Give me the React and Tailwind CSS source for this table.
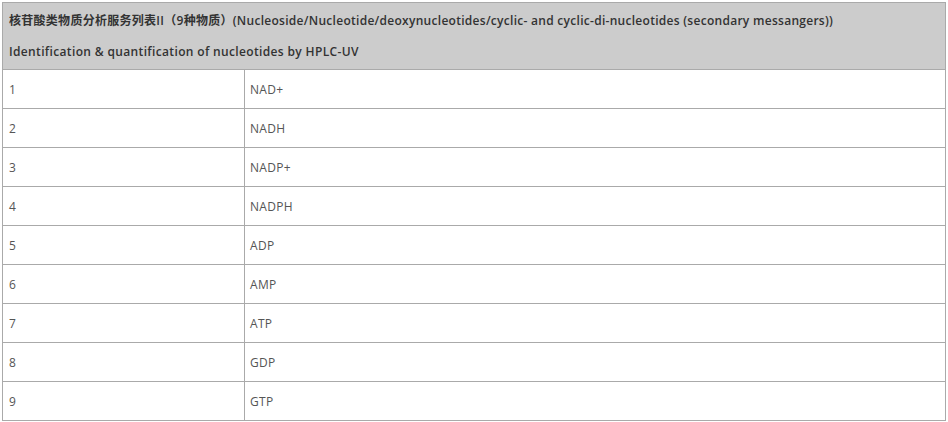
import React from 'react';

const rows = ['NAD+', 'NADH', 'NADP+', 'NADPH', 'ADP', 'AMP', 'ATP', 'GDP', 'GTP'];

const App = () => {
    return (
        <div className="w-[948px] h-[422px] bg-white p-[2px]" style={{ fontFamily: '"Open Sans", "Noto Sans CJK SC", sans-serif' }}>
            <table className="w-[944px] border-collapse text-[12px] table-fixed">
                <colgroup>
                    <col className="w-[242px]" />
                    <col />
                </colgroup>
                <thead>
                    <tr>
                        <th colSpan={2} className="bg-[#cccccc] border border-[#aaaaaa] text-left font-semibold text-[#333333] px-[6px] pt-[2px] pb-[2px]">
                            <div className="leading-[31px] whitespace-nowrap tracking-[0.28px]">
                                核苷酸类物质分析服务列表II（9种物质）(Nucleoside/Nucleotide/deoxynucleotides/cyclic- and cyclic-di-nucleotides (secondary messangers))
                            </div>
                            <div className="leading-[31px] tracking-[0.35px]">Identification &amp; quantification of nucleotides by HPLC-UV</div>
                        </th>
                    </tr>
                </thead>
                <tbody>
                    {rows.map((name, i) => (
                        <tr key={name} className="h-[39px]">
                            <td className="border border-[#aaaaaa] px-[6px] pt-[2px] text-[#555555] tracking-[0.3px]">{i + 1}</td>
                            <td className="border border-[#aaaaaa] px-[5px] pt-[2px] text-[#555555] tracking-[0.3px]">{name}</td>
                        </tr>
                    ))}
                </tbody>
            </table>
        </div>
    );
};

export default App;
